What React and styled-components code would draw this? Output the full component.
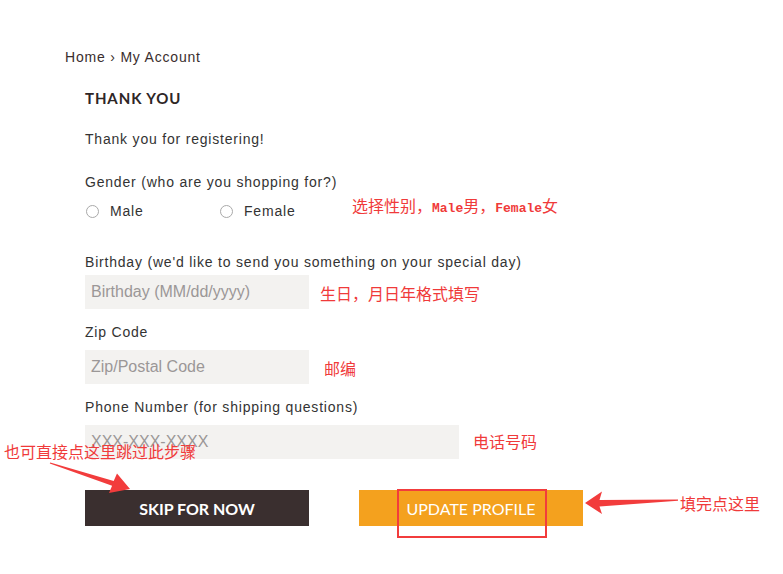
import React from 'react';
import styled, { createGlobalStyle } from 'styled-components';

const GlobalStyle = createGlobalStyle`
  body {
    margin: 0;
    background: #fff;
    font-family: "Liberation Sans", Arial, sans-serif;
    color: #333;
  }
`;

const Page = styled.div`
  position: relative;
  width: 783px;
  min-height: 574px;
  padding: 47px 0 0 65px;
  box-sizing: border-box;
`;

const Breadcrumb = styled.div`
  font-size: 14px;
  line-height: 20px;
  letter-spacing: 0.8px;
  color: #3a2e2e;
`;

const Content = styled.div`
  padding-left: 20px;
  display: flex;
  flex-direction: column;
`;

const Title = styled.h2`
  margin: 21px 0 0;
  font-family: "Lato", "Liberation Sans", sans-serif;
  font-weight: 700;
  font-size: 15px;
  line-height: 20px;
  letter-spacing: 0.9px;
  color: #2e2626;
`;

const Text = styled.p`
  margin: ${p => p.$top}px 0 0;
  font-size: 14px;
  line-height: 20px;
  letter-spacing: 0.8px;
  color: #333;
`;

const Label = styled.label`
  display: block;
  margin: ${p => p.$top}px 0 ${p => p.$gap}px;
  font-size: 14px;
  line-height: 20px;
  letter-spacing: 0.8px;
  color: #333;
`;

const RadioRow = styled.div`
  display: flex;
  margin-top: 9px;
  height: 20px;
`;

const Option = styled.label`
  display: flex;
  align-items: center;
  width: 134px;
  font-size: 14px;
  letter-spacing: 0.8px;
  color: #333;
`;

const Radio = styled.input`
  appearance: none;
  width: 13px;
  height: 13px;
  margin: 0 11px 0 1px;
  border: 1px solid #a9a9a9;
  border-radius: 50%;
  background: #fff;
  box-sizing: border-box;
`;

const Input = styled.input`
  display: block;
  width: ${p => p.$w}px;
  height: 34px;
  border: none;
  outline: none;
  background: #f3f2f0;
  padding: 0 6px;
  box-sizing: border-box;
  font-family: "Liberation Sans", Arial, sans-serif;
  font-size: 16px;
  color: #333;
  &::placeholder {
    color: #9b9797;
  }
`;

const Buttons = styled.div`
  display: flex;
  gap: 50px;
  margin-top: 31px;
`;

const Button = styled.button`
  width: 224px;
  height: 36px;
  border: none;
  background: ${p => p.$bg};
  color: #fff;
  font-family: "Lato", "Liberation Sans", sans-serif;
  font-weight: ${p => p.$weight};
  font-size: 16px;
  letter-spacing: 0;
  text-transform: uppercase;
`;

const Note = styled.div`
  position: absolute;
  left: ${p => p.$x}px;
  top: ${p => p.$y}px;
  font-family: "Noto Sans CJK SC", sans-serif;
  font-size: 16px;
  line-height: 20px;
  color: #f03a3a;
  white-space: nowrap;
`;

const Mono = styled.span`
  font-family: "Liberation Mono", monospace;
  font-size: 13px;
  font-weight: 700;
`;

const Arrow = styled.svg`
  position: absolute;
  left: ${p => p.$x}px;
  top: ${p => p.$y}px;
`;

const Highlight = styled.div`
  position: absolute;
  left: 397px;
  top: 489px;
  width: 150px;
  height: 49px;
  border: 2px solid #f23c3c;
  box-sizing: border-box;
`;

export default function App() {
  return (
    <Page>
      <GlobalStyle />
      <Breadcrumb>Home › My Account</Breadcrumb>
      <Content>
        <Title>THANK YOU</Title>
        <Text $top={21}>Thank you for registering!</Text>
        <Label $top={23} $gap={0}>Gender (who are you shopping for?)</Label>
        <RadioRow>
          <Option><Radio type="radio" name="gender" />Male</Option>
          <Option><Radio type="radio" name="gender" />Female</Option>
        </RadioRow>
        <Label $top={31} $gap={3}>Birthday (we'd like to send you something on your special day)</Label>
        <Input $w={224} placeholder="Birthday (MM/dd/yyyy)" />
        <Label $top={13} $gap={8}>Zip Code</Label>
        <Input $w={224} placeholder="Zip/Postal Code" />
        <Label $top={13} $gap={8}>Phone Number (for shipping questions)</Label>
        <Input $w={374} placeholder="XXX-XXX-XXXX" />
        <Buttons>
          <Button $bg="#3a2f2f" $weight={700}>Skip for now</Button>
          <Button $bg="#f4a11e" $weight={400}>Update profile</Button>
        </Buttons>
      </Content>

      <Note $x={352} $y={195}>选择性别，<Mono>Male</Mono>男，<Mono>Female</Mono>女</Note>
      <Note $x={320} $y={283}>生日，月日年格式填写</Note>
      <Note $x={324} $y={358}>邮编</Note>
      <Note $x={473} $y={431}>电话号码</Note>
      <Note $x={4} $y={441}>也可直接点这里跳过此步骤</Note>
      <Note $x={680} $y={493}>填完点这里</Note>

      <Arrow $x={44} $y={456} width="92" height="40" viewBox="0 0 92 40">
        <polygon
          points="6.2,6.5 69.7,25 73,17.5 86,33 65,37 68.1,29.8 5.8,7.5"
          fill="#f23c3c"
        />
      </Arrow>
      <Arrow $x={582} $y={488} width="100" height="30" viewBox="0 0 100 30">
        <polygon
          points="3,15 20,3.5 17.5,12 96,11.5 96,12.8 17.5,18.5 20,26"
          fill="#f23c3c"
        />
      </Arrow>
      <Highlight />
    </Page>
  );
}
